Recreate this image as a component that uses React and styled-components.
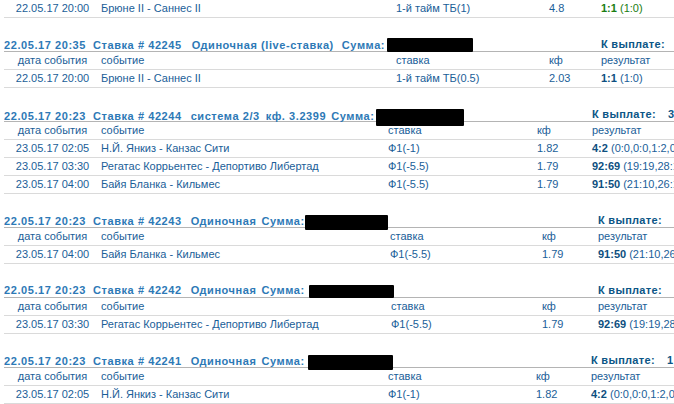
import React from "react";
import styled, { createGlobalStyle } from "styled-components";

const Global = createGlobalStyle`
  html, body { margin: 0; padding: 0; background: #fff; overflow: hidden; }
  body { font-family: "Liberation Sans", Arial, sans-serif; font-size: 11px; color: #1b5f96; }
`;

const Page = styled.div`
  width: 900px;
  padding-left: 4px;
`;

const Block = styled.section`
  margin-top: ${(p) => (p.$first ? "0" : "20px")};
`;

const TitleRow = styled.div`
  display: grid;
  grid-template-columns: ${(p) => p.$cols};
  height: 13px;
  line-height: 13px;
  border-bottom: 1px solid #b4b4b4;
  font-weight: bold;
  white-space: nowrap;
`;

const TitleMain = styled.div`
  grid-column: 1 / 5;
  color: #2d79b6;
  display: flex;
  align-items: center;
  letter-spacing: 0.57px;
`;

const TitlePart = styled.span`
  margin-right: ${(p) => p.$gap ?? 7}px;
`;

const Redaction = styled.span`
  display: inline-block;
  background: #000;
  width: ${(p) => p.$w}px;
  height: ${(p) => p.$h}px;
  margin-left: ${(p) => p.$ml}px;
  transform: translateY(${(p) => p.$dy}px);
  border-radius: 1px;
`;

const PayLabel = styled.div`
  color: #0c5686;
  letter-spacing: 0.3px;
`;

const PayValue = styled.div`
  color: #0c5686;
`;

const Row = styled.div`
  display: grid;
  grid-template-columns: ${(p) => p.$cols};
  height: 17px;
  line-height: 17px;
  border-bottom: 1px solid #dadada;
  white-space: nowrap;
`;

const Cell = styled.div`
  text-align: ${(p) => (p.$center ? "center" : "left")};
  color: ${(p) => (p.$win ? "#1a7d12" : "#1a5e98")};
  overflow: visible;
`;

const Score = styled.b`
  color: ${(p) => (p.$win ? "#1a7d12" : "#0d4f80")};
`;

const blocks = [
  {
    first: true,
    col: { s: 396, k: 549, r: 601 },
    rows: [
      { d: "22.05.17 20:00", e: "Брюне II - Саннес II", b: "1-й тайм ТБ(1)", kf: "4.8", sc: "1:1", det: "(1:0)", win: true },
    ],
  },
  {
    col: { s: 396, k: 549, r: 601 },
    title: ["22.05.17 20:35", "Ставка # 42245", "Одиночная (live-ставка)", "Сумма:"],
    gaps: [7, 10, 8],
    red: { w: 86, h: 14, ml: 2, dy: 0 },
    pay: "",
    rows: [
      { d: "22.05.17 20:00", e: "Брюне II - Саннес II", b: "1-й тайм ТБ(0.5)", kf: "2.03", sc: "1:1", det: "(1:0)" },
    ],
  },
  {
    col: { s: 388, k: 537, r: 592 },
    title: ["22.05.17 20:23", "Ставка # 42244", "система 2/3", "кф. 3.2399", "Сумма:"],
    gaps: [7, 9, 6, 5],
    red: { w: 88, h: 17, ml: 2, dy: 1 },
    pay: "3",
    rows: [
      { d: "23.05.17 02:05", e: "Н.Й. Янкиз - Канзас Сити", b: "Ф1(-1)", kf: "1.82", sc: "4:2", det: "(0:0,0:0,1:2,0:0,1:0,0:0,2:0,0:0,0:0)" },
      { d: "23.05.17 03:30", e: "Регатас Коррьентес - Депортиво Либертад", b: "Ф1(-5.5)", kf: "1.79", sc: "92:69", det: "(19:19,28:16,24:16,21:18)" },
      { d: "23.05.17 04:00", e: "Байя Бланка - Кильмес", b: "Ф1(-5.5)", kf: "1.79", sc: "91:50", det: "(21:10,26:12,22:12,22:16)" },
    ],
  },
  {
    col: { s: 390, k: 542, r: 598 },
    title: ["22.05.17 20:23", "Ставка # 42243", "Одиночная", "Сумма:"],
    gaps: [7, 9, 5],
    red: { w: 83, h: 15, ml: 0, dy: 1 },
    pay: "",
    rows: [
      { d: "23.05.17 04:00", e: "Байя Бланка - Кильмес", b: "Ф1(-5.5)", kf: "1.79", sc: "91:50", det: "(21:10,26:12,22:12,22:16)" },
    ],
  },
  {
    col: { s: 391, k: 542, r: 598 },
    title: ["22.05.17 20:23", "Ставка # 42242", "Одиночная", "Сумма:"],
    gaps: [7, 9, 5],
    red: { w: 85, h: 13, ml: 4, dy: 1 },
    pay: "",
    rows: [
      { d: "23.05.17 03:30", e: "Регатас Коррьентес - Депортиво Либертад", b: "Ф1(-5.5)", kf: "1.79", sc: "92:69", det: "(19:19,28:16,24:16,21:18)" },
    ],
  },
  {
    col: { s: 388, k: 536, r: 591 },
    title: ["22.05.17 20:23", "Ставка # 42241", "Одиночная", "Сумма:"],
    gaps: [7, 9, 5],
    red: { w: 85, h: 15, ml: 3, dy: 1 },
    pay: "1",
    rows: [
      { d: "23.05.17 02:05", e: "Н.Й. Янкиз - Канзас Сити", b: "Ф1(-1)", kf: "1.82", sc: "4:2", det: "(0:0,0:0,1:2,0:0,1:0,0:0,2:0,0:0,0:0)" },
    ],
  },
];

const colsOf = ({ s, k, r }) => `97px ${s - 101}px ${k - s}px ${r - k}px 76px 1fr`;

function BetBlock({ b }) {
  const cols = colsOf(b.col);
  return (
    <Block $first={b.first}>
      {b.title && (
        <>
          <TitleRow $cols={cols}>
            <TitleMain>
              {b.title.map((t, i) => (
                <TitlePart key={i} $gap={i < b.title.length - 1 ? b.gaps[i] : 0}>
                  {t}
                </TitlePart>
              ))}
              <Redaction $w={b.red.w} $h={b.red.h} $ml={b.red.ml} $dy={b.red.dy} />
            </TitleMain>
            <PayLabel>К выплате:</PayLabel>
            <PayValue>{b.pay}</PayValue>
          </TitleRow>
          <Row $cols={cols}>
            <Cell $center>дата события</Cell>
            <Cell>событие</Cell>
            <Cell>ставка</Cell>
            <Cell>кф</Cell>
            <Cell>результат</Cell>
            <Cell />
          </Row>
        </>
      )}
      {b.rows.map((r, i) => (
        <Row key={i} $cols={cols}>
          <Cell $center>{r.d}</Cell>
          <Cell>{r.e}</Cell>
          <Cell>{r.b}</Cell>
          <Cell>{r.kf}</Cell>
          <Cell $win={r.win}>
            <Score $win={r.win}>{r.sc}</Score> {r.det}
          </Cell>
          <Cell />
        </Row>
      ))}
    </Block>
  );
}

export default function App() {
  return (
    <>
      <Global />
      <Page>
        {blocks.map((b, i) => (
          <BetBlock key={i} b={b} />
        ))}
      </Page>
    </>
  );
}
